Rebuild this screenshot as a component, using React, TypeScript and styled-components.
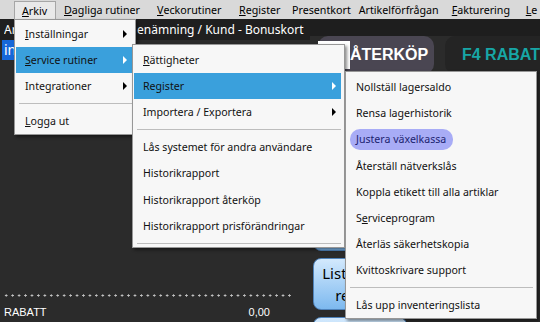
import styled, { createGlobalStyle } from "styled-components";

const GlobalStyle = createGlobalStyle`
  html, body {
    margin: 0;
    padding: 0;
    background: #2b2b2b;
    overflow: hidden;
  }
  body {
    font-family: "Noto Sans", "Open Sans", sans-serif;
  }
`;

type Entry =
  | { kind: "sep" }
  | { kind: "item"; label: string; sub?: boolean; state?: "active" | "hover" };

const topMenu: [string, number][] = [
  ["&Arkiv", 42],
  ["&Dagliga rutiner", 93],
  ["&Veckorutiner", 82],
  ["&Register", 53],
  ["Presentkort", 66],
  ["Artikelförfrågan", 93],
  ["&Fakturering", 74],
  ["&Le", 20],
];

const arkivMenu: Entry[] = [
  { kind: "item", label: "&Inställningar", sub: true },
  { kind: "item", label: "&Service rutiner", sub: true, state: "active" },
  { kind: "item", label: "Integrationer", sub: true },
  { kind: "sep" },
  { kind: "item", label: "&Logga ut" },
];

const serviceMenu: Entry[] = [
  { kind: "item", label: "&Rättigheter" },
  { kind: "item", label: "Register", sub: true, state: "active" },
  { kind: "item", label: "Importera / Exportera", sub: true },
  { kind: "sep" },
  { kind: "item", label: "Lås systemet för andra användare" },
  { kind: "item", label: "Historikrapport" },
  { kind: "item", label: "Historikrapport återköp" },
  { kind: "item", label: "Historikrapport prisförändringar" },
  { kind: "sep" },
];

const registerMenu: Entry[] = [
  { kind: "item", label: "Nollställ lagersaldo" },
  { kind: "item", label: "Rensa lagerhistorik" },
  { kind: "item", label: "Justera växelkassa", state: "hover" },
  { kind: "item", label: "Återställ nätverkslås" },
  { kind: "item", label: "Koppla etikett till alla artiklar" },
  { kind: "item", label: "S&erviceprogram" },
  { kind: "item", label: "Återläs säkerhetskopia" },
  { kind: "item", label: "Kvittoskrivare support" },
  { kind: "sep" },
  { kind: "item", label: "Lås upp inventeringslista" },
];

const quickButtons: [string, string][] = [
  ["Lista order", "kassa"],
  ["Lista kvitton", "dagens"],
  ["Lista order", "sparade"],
  ["Lista order", "returer"],
  ["Lista köp", "kund"],
];

function Mnemonic({ text }: { text: string }) {
  const i = text.indexOf("&");
  if (i < 0) return <>{text}</>;
  return (
    <>
      {text.slice(0, i)}
      <Key>{text[i + 1]}</Key>
      {text.slice(i + 2)}
    </>
  );
}

function Dropdown({ entries, x, y, w, pad }: { entries: Entry[]; x: number; y: number; w: number; pad: number }) {
  return (
    <Popup $x={x} $y={y} $w={w} $pad={pad}>
      {entries.map((e, i) =>
        e.kind === "sep" ? (
          <Separator key={i} />
        ) : (
          <MenuRow key={i} $active={e.state === "active"}>
            <Label $pill={e.state === "hover"}>
              <Mnemonic text={e.label} />
            </Label>
            {e.sub && <Arrow $light={e.state === "active"} />}
          </MenuRow>
        )
      )}
    </Popup>
  );
}

export default function App() {
  return (
    <>
      <GlobalStyle />
      <Screen>
        <MenuBar>
          {topMenu.map(([label, w], i) => (
            <BarItem key={label} $w={w} $open={i === 0}>
              <Mnemonic text={label} />
            </BarItem>
          ))}
        </MenuBar>
        <Workspace>
          <LeftPane>
            <TitleRow>
              <TitleLead>Artikelnummer / B</TitleLead>enämning / Kund - Bonuskort
            </TitleRow>
            <LoginTab>inloggad</LoginTab>
            <Filler />
            <DottedRule />
            <TotalRow>
              <span>RABATT</span>
              <span>0,00</span>
            </TotalRow>
          </LeftPane>
          <RightPane>
            <TopButtons>
              <ActionButton $tone="gray">
                <ReceiptIcon />
                ÅTERKÖP
              </ActionButton>
              <ActionButton $tone="dark">F4 RABATT</ActionButton>
            </TopButtons>
            <QuickList>
              {quickButtons.map(([a, b], i) => (
                <QuickButton key={i}>
                  {a}
                  <br />
                  {b}
                </QuickButton>
              ))}
            </QuickList>
          </RightPane>
        </Workspace>
        <Dropdown entries={arkivMenu} x={14} y={19} w={122} pad={1} />
        <Dropdown entries={serviceMenu} x={132} y={44} w={213} pad={2} />
        <Dropdown entries={registerMenu} x={345} y={71} w={192} pad={2} />
      </Screen>
    </>
  );
}

const Screen = styled.div`
  position: relative;
  width: 540px;
  height: 322px;
  display: flex;
  flex-direction: column;
  overflow: hidden;
  background: #2b2b2b;
`;

const MenuBar = styled.div`
  flex: 0 0 19px;
  display: flex;
  padding-left: 14px;
  background: #d9d9d9;
  font-size: 10.7px;
  color: #000;
  overflow: hidden;
`;

const BarItem = styled.div<{ $w: number; $open?: boolean }>`
  flex: 0 0 ${(p) => p.$w}px;
  display: flex;
  align-items: center;
  padding-left: 8px;
  box-sizing: border-box;
  white-space: nowrap;
  ${(p) =>
    p.$open &&
    `
    background: #e9e9e9;
    border: 1px solid #a6a6a6;
    border-bottom: none;
    margin-top: 1px;
    padding-left: 7px;
  `}
`;

const Key = styled.span`
  text-decoration: underline;
  text-underline-offset: 1px;
`;

const Workspace = styled.div`
  flex: 1;
  display: grid;
  grid-template-columns: 310px 1fr;
  grid-template-rows: minmax(0, 1fr);
  min-height: 0;
`;

const LeftPane = styled.div`
  display: flex;
  flex-direction: column;
  min-height: 0;
  background: #2b2b2b;
  padding-bottom: 2px;
`;

const TitleRow = styled.div`
  flex: 0 0 21px;
  display: flex;
  align-items: center;
  padding-left: 4px;
  background: #1f1f1f;
  color: #fff;
  font-size: 12px;
  white-space: nowrap;
`;

const TitleLead = styled.span`
  display: inline-block;
  width: 133px;
  overflow: hidden;
`;

const LoginTab = styled.div`
  width: 110px;
  height: 20px;
  margin-left: 2px;
  background: #1667d9;
  color: #fff;
  font-size: 14px;
  line-height: 20px;
  padding-left: 2px;
`;

const Filler = styled.div`
  flex: 1;
`;

const DottedRule = styled.div`
  width: 288px;
  height: 3px;
  margin-left: 3px;
  background-image: radial-gradient(circle, #c4c4c4 0.9px, transparent 1.3px);
  background-size: 6.45px 3px;
`;

const TotalRow = styled.div`
  display: flex;
  justify-content: space-between;
  width: 266px;
  height: 17px;
  margin: 6px 0 0 4px;
  align-items: center;
  color: #fff;
  font-family: "Liberation Sans", Arial, sans-serif;
  font-size: 11px;
`;

const RightPane = styled.div`
  display: flex;
  flex-direction: column;
  min-height: 0;
  overflow: hidden;
  background: linear-gradient(#1e1e1e 0 17px, #2b2b2b 17px);
  padding-top: 17px;
`;

const TopButtons = styled.div`
  display: flex;
  flex: 0 0 38px;
  gap: 11px;
  padding-left: 8px;
`;

const ActionButton = styled.div<{ $tone: "gray" | "dark" }>`
  display: flex;
  align-items: center;
  flex: 0 0 ${(p) => (p.$tone === "gray" ? "116px" : "110px")};
  box-sizing: border-box;
  padding-left: ${(p) => (p.$tone === "gray" ? "0" : "17px")};
  border-radius: 10px;
  background: ${(p) => (p.$tone === "gray" ? "#4a4652" : "#242424")};
  color: ${(p) => (p.$tone === "gray" ? "#fff" : "#17a6a6")};
  font-family: "Liberation Sans", Arial, sans-serif;
  font-weight: bold;
  font-size: 16px;
  white-space: nowrap;
`;

const ReceiptIcon = styled.span`
  width: 32px;
  height: 28px;
  margin-right: 0;
  background: #fff;
`;

const QuickList = styled.div`
  display: flex;
  flex-direction: column;
  gap: 7px;
  margin: 7px 0 0 3px;
`;

const QuickButton = styled.div`
  flex: 0 0 52px;
  width: 94px;
  box-sizing: border-box;
  display: flex;
  flex-direction: column;
  justify-content: center;
  text-align: center;
  border: 1px solid #4f83bb;
  border-radius: 8px;
  background: linear-gradient(#d3e9fd, #7db9ef);
  color: #000;
  font-size: 15px;
  line-height: 22px;
  white-space: nowrap;
`;

const Popup = styled.div<{ $x: number; $y: number; $w: number; $pad: number }>`
  position: absolute;
  left: ${(p) => p.$x}px;
  top: ${(p) => p.$y}px;
  width: ${(p) => p.$w}px;
  box-sizing: border-box;
  padding-top: ${(p) => p.$pad}px;
  background: #f7f7f7;
  border: 1px solid #979797;
  box-shadow: 2px 2px 3px rgba(0, 0, 0, 0.45);
  font-size: 10.6px;
  color: #111;
`;

const MenuRow = styled.div<{ $active?: boolean }>`
  height: 26.2px;
  display: flex;
  align-items: center;
  justify-content: space-between;
  margin: 0 3px 0 1px;
  padding: 0 5px 0 9px;
  background: ${(p) => (p.$active ? "#3aa0dc" : "transparent")};
  white-space: nowrap;
`;

const Label = styled.span<{ $pill?: boolean }>`
  ${(p) =>
    p.$pill &&
    `
    background: #a8acf6;
    color: #1c2370;
    border-radius: 10px;
    padding: 3px 7px 4px 6px;
    margin-left: -6px;
  `}
`;

const Arrow = styled.span<{ $light?: boolean }>`
  width: 0;
  height: 0;
  border-top: 4px solid transparent;
  border-bottom: 4px solid transparent;
  border-left: 4px solid ${(p) => (p.$light ? "#fff" : "#000")};
`;

const Separator = styled.div`
  height: 8.5px;
  display: flex;
  align-items: center;
  margin: 0 3px 0 4px;
  &::after {
    content: "";
    flex: 1;
    height: 1px;
    background: #bdbdbd;
  }
`;
